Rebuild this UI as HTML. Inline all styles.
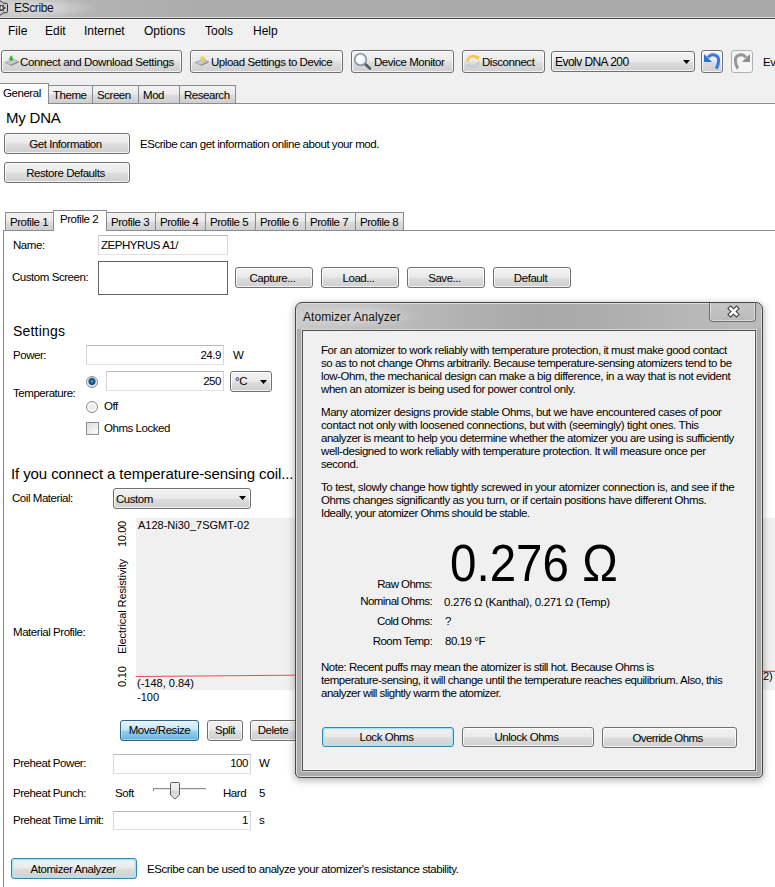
<!DOCTYPE html>
<html><head><meta charset="utf-8">
<style>
html,body{margin:0;padding:0;width:775px;height:887px;overflow:hidden}
body{width:775px;height:887px;overflow:hidden;background:#f0f0f0;position:relative;font-family:"Liberation Sans",sans-serif;font-size:11px;color:#000}
.a{position:absolute;box-sizing:border-box}
.t{position:absolute;white-space:pre;line-height:13px;font-size:11.5px;letter-spacing:-0.45px}
.s{position:absolute;white-space:pre;font-size:12px;line-height:14px}
.btn{position:absolute;box-sizing:border-box;border:1px solid #707070;border-radius:3px;background:linear-gradient(#f2f2f2,#ebebeb 48%,#dddddd 52%,#cfcfcf);box-shadow:inset 0 0 0 1px rgba(255,255,255,.75);white-space:pre;font-size:11.5px;letter-spacing:-0.45px;text-align:center}
.tb{position:absolute;box-sizing:border-box;background:#fff;border:1px solid #d6d6d6;border-top-color:#b9b9b9;border-bottom-color:#e2e2e2}
.tab{position:absolute;box-sizing:border-box;border:1px solid #898c95;border-bottom:none;background:linear-gradient(#f2f2f2,#ebebeb 48%,#dddddd 52%,#cfcfcf);text-align:left;padding-left:4px;white-space:pre;font-size:11.5px;letter-spacing:-0.45px}
.tabsel{background:#fff;z-index:2}
</style></head><body>

<!-- title bar -->
<div class="a" style="left:0;top:0;width:775px;height:17px;background:linear-gradient(90deg,#c4c4c4 0,#b4b4b4 70px,#acacac 200px,#a9a9a9 775px)"></div>
<div class="a" style="left:0;top:17px;width:775px;height:1px;background:#dedede"></div>
<div class="a" style="left:0;top:18px;width:775px;height:1px;background:#3f3f3f"></div>
<div class="a" style="left:0;top:19px;width:775px;height:1px;background:#fbfbfb"></div>


<!-- menu -->
<div class="s" style="left:8px;top:24px">File</div>
<div class="s" style="left:45px;top:24px">Edit</div>
<div class="s" style="left:84px;top:24px">Internet</div>
<div class="s" style="left:144px;top:24px">Options</div>
<div class="s" style="left:205px;top:24px">Tools</div>
<div class="s" style="left:253px;top:24px">Help</div>

<!-- toolbar -->
<div class="btn" style="left:1px;top:50px;width:181px;height:23px;text-align:left;padding-left:18px;padding-top:1px;line-height:21px;letter-spacing:-0.36px">Connect and Download Settings</div>
<div class="btn" style="left:190px;top:50px;width:153px;height:23px;text-align:left;padding-left:20px;padding-top:1px;line-height:21px">Upload Settings to Device</div>
<div class="btn" style="left:351px;top:50px;width:103px;height:23px;text-align:left;padding-left:22px;padding-top:1px;line-height:21px">Device Monitor</div>
<div class="btn" style="left:462px;top:50px;width:83px;height:23px;text-align:left;padding-left:19px;padding-top:1px;line-height:21px">Disconnect</div>
<div class="btn" style="left:551px;top:51px;width:144px;height:21px;text-align:left;padding-left:3px;padding-top:1px;line-height:19px;font-size:12px;letter-spacing:-0.55px">Evolv DNA 200</div>
<div class="btn" style="left:701px;top:50px;width:22px;height:23px"></div>
<div class="btn" style="left:731px;top:50px;width:22px;height:23px;border-color:#adb2b5;background:#f4f4f4;box-shadow:none"></div>
<div class="t" style="left:763px;top:56px;width:12px;overflow:hidden">Ev</div>


<!-- toolbar icons -->
<svg class="a" style="left:4px;top:54px" width="16" height="13" viewBox="0 0 16 13"><path d="M1 8.5 L9 5.5 L14.5 7.5 L6.5 11 Z" fill="#c9c9d2" stroke="#9a9aa8" stroke-width=".8"/><path d="M6.5 11 L14.5 7.5 L14.5 8.8 L6.5 12.2 Z" fill="#8c8c98"/><path d="M6 2 H8.5 V4.5 H10.2 L7.25 7.6 L4.3 4.5 H6 Z" fill="#2f9e2a" stroke="#a6e09c" stroke-width=".7"/></svg>
<svg class="a" style="left:194px;top:54px" width="16" height="13" viewBox="0 0 16 13"><path d="M1 8.5 L9 5.5 L14.5 7.5 L6.5 11 Z" fill="#c9c9d2" stroke="#9a9aa8" stroke-width=".8"/><path d="M6.5 11 L14.5 7.5 L14.5 8.8 L6.5 12.2 Z" fill="#8c8c98"/><path d="M7.2 7.8 V5 H5.6 L8.6 1.8 L11.6 5 H10 V7.8 Z" fill="#f4d655" stroke="#e0c060" stroke-width=".5"/></svg>
<svg class="a" style="left:353px;top:52px" width="20" height="18" viewBox="0 0 20 18"><line x1="11.5" y1="11.5" x2="17" y2="16.5" stroke="#505a64" stroke-width="2.6" stroke-linecap="round"/><circle cx="7.5" cy="7.5" r="5.8" fill="#eef4fb" stroke="#8894a0" stroke-width="1.6"/><circle cx="6.5" cy="6.5" r="3" fill="#ffffff" opacity=".8"/></svg>
<svg class="a" style="left:465px;top:54px" width="16" height="15" viewBox="0 0 16 15"><path d="M2.5 7.5 A5.5 5.5 0 0 1 12.5 4.5" fill="none" stroke="#f0c850" stroke-width="2.6"/><path d="M10.5 1.5 L14.5 2.5 L13.5 6.5 Z" fill="#f0c850"/><path d="M13.5 7.5 A5.5 5.5 0 0 1 3.5 10.5" fill="none" stroke="#c4ccd4" stroke-width="2.6"/><path d="M5.5 13.5 L1.5 12.5 L2.5 8.5 Z" fill="#c4ccd4"/></svg>
<svg class="a" style="left:701px;top:50px" width="22" height="23" viewBox="0 0 22 23"><path d="M3 4 L3 12 L11 12 Z" fill="#2f6fd8"/><path d="M7.2 7.5 A5.6 5.6 0 0 1 17.6 10.5 Q17.6 15 15.2 18.6" fill="none" stroke="#3a78dc" stroke-width="3"/></svg>
<svg class="a" style="left:731px;top:50px" width="22" height="23" viewBox="0 0 22 23"><path d="M19 4 L19 12 L11 12 Z" fill="#8e8e8e"/><path d="M14.8 7.5 A5.6 5.6 0 0 0 4.4 10.5 Q4.4 15 6.8 18.6" fill="none" stroke="#979797" stroke-width="3"/></svg>
<!-- dropdown arrows -->
<svg class="a" style="left:683px;top:60px" width="8" height="5" viewBox="0 0 8 5"><path d="M0 0 H7 L3.5 4 Z" fill="#000"/></svg>
<!-- app icon -->
<div class="a" style="left:0;top:0;width:120px;height:17px;background:radial-gradient(ellipse 60px 12px at 38px 8px,rgba(235,235,235,.75),rgba(235,235,235,0))"></div>
<svg class="a" style="left:0;top:0" width="10" height="17" viewBox="0 0 10 17"><path d="M0 1 L1.5 1.5 L3 3.2 H6.8 L7.5 4.2 V11.8 L6.8 12.8 H3 L1.5 14.5 L0 15" fill="#c8c8c8" stroke="#333" stroke-width="1"/><circle cx="1" cy="8" r="2.6" fill="#777" stroke="#222" stroke-width=".8"/><rect x="1" y="6.5" width="1.2" height="2.5" fill="#fff"/><circle cx="4.6" cy="8" r="1" fill="#444"/><circle cx="3.4" cy="5.4" r=".6" fill="#333"/><circle cx="3.4" cy="10.6" r=".6" fill="#333"/></svg>
<div class="s" style="left:14px;top:1px;color:#111;letter-spacing:-0.4px">EScribe</div>

<!-- main tabs -->
<div class="a" style="left:0;top:103px;width:775px;height:784px;background:#fff;border-top:1px solid #898c95"></div>
<div class="tab" style="left:48px;top:85px;width:45px;height:18px;line-height:19px">Theme</div>
<div class="tab" style="left:92px;top:85px;width:47px;height:18px;line-height:19px">Screen</div>
<div class="tab" style="left:138px;top:85px;width:42px;height:18px;line-height:19px">Mod</div>
<div class="tab" style="left:179px;top:85px;width:57px;height:18px;line-height:19px">Research</div>
<div class="tab tabsel" style="left:-1px;top:83px;width:50px;height:21px;line-height:19px;padding-left:3px">General</div>

<div class="t" style="left:6px;top:109px;font-size:15px;line-height:17px;letter-spacing:-0.2px">My DNA</div>
<div class="btn" style="left:4px;top:133px;width:126px;height:21px;line-height:19px;padding-top:1px;padding-right:3px">Get Information</div>
<div class="t" style="left:140px;top:138px">EScribe can get information online about your mod.</div>
<div class="btn" style="left:4px;top:162px;width:126px;height:21px;line-height:19px;padding-top:1px;padding-right:3px">Restore Defaults</div>


<!-- profile tabs -->
<div class="a" style="left:3px;top:230px;width:772px;height:657px;background:#fff;border-left:1px solid #898c95;border-top:1px solid #898c95"></div>
<div class="tab" style="left:5px;top:212px;width:49px;height:18px;line-height:19px">Profile 1</div>
<div class="tab" style="left:106px;top:212px;width:50px;height:18px;line-height:19px">Profile 3</div>
<div class="tab" style="left:155px;top:212px;width:51px;height:18px;line-height:19px">Profile 4</div>
<div class="tab" style="left:205px;top:212px;width:51px;height:18px;line-height:19px">Profile 5</div>
<div class="tab" style="left:255px;top:212px;width:51px;height:18px;line-height:19px">Profile 6</div>
<div class="tab" style="left:305px;top:212px;width:51px;height:18px;line-height:19px">Profile 7</div>
<div class="tab" style="left:355px;top:212px;width:49px;height:18px;line-height:19px">Profile 8</div>
<div class="tab tabsel" style="left:53px;top:210px;width:54px;height:21px;line-height:17px;padding-left:6px">Profile 2</div>

<div class="t" style="left:13px;top:239px">Name:</div>
<div class="tb" style="left:98px;top:235px;width:130px;height:20px"></div>
<div class="t" style="left:101px;top:239px">ZEPHYRUS A1/</div>
<div class="t" style="left:12px;top:271px">Custom Screen:</div>
<div class="a" style="left:98px;top:261px;width:130px;height:34px;border:1px solid #646464;background:#fff"></div>
<div class="btn" style="left:235px;top:267px;width:78px;height:21px;line-height:19px;padding-top:1px;padding-right:3px">Capture...</div>
<div class="btn" style="left:321px;top:267px;width:78px;height:21px;line-height:19px;padding-top:1px;padding-right:3px">Load...</div>
<div class="btn" style="left:407px;top:267px;width:78px;height:21px;line-height:19px;padding-top:1px;padding-right:3px">Save...</div>
<div class="btn" style="left:493px;top:267px;width:78px;height:21px;line-height:19px;padding-top:1px;padding-right:3px">Default</div>

<div class="t" style="left:13px;top:323px;font-size:14px;line-height:16px;letter-spacing:0.2px">Settings</div>
<div class="t" style="left:13px;top:349px">Power:</div>
<div class="tb" style="left:86px;top:345px;width:138px;height:20px"></div>
<div class="t" style="left:86px;top:349px;width:135px;text-align:right">24.9</div>
<div class="t" style="left:233px;top:349px">W</div>
<div class="t" style="left:13px;top:387px">Temperature:</div>
<div class="a" style="left:86px;top:376px;width:12px;height:12px;border-radius:50%;border:1px solid #8a8a8a;background:radial-gradient(circle at 50% 45%,#6fb6e0 0,#1d6a9e 1.5px,#0f4670 3px,#8aa8bd 3.6px,#f6f6f6 4.4px,#e8e8e8 5px)"></div>
<div class="tb" style="left:106px;top:371px;width:118px;height:20px"></div>
<div class="t" style="left:106px;top:375px;width:115px;text-align:right">250</div>
<div class="btn" style="left:230px;top:371px;width:42px;height:21px;line-height:19px;text-align:left;padding-left:4px">°C</div>
<svg class="a" style="left:260px;top:380px" width="8" height="5" viewBox="0 0 8 5"><path d="M0 0 H7 L3.5 4 Z" fill="#000"/></svg>
<div class="a" style="left:86px;top:401px;width:12px;height:12px;border-radius:50%;border:1px solid #8a8a8a;background:radial-gradient(circle at 50% 50%,#e8e8e8 0,#f8f8f8 5px)"></div>
<div class="t" style="left:104px;top:400px">Off</div>
<div class="a" style="left:86px;top:422px;width:13px;height:13px;border:1px solid #8e8f8f;background:linear-gradient(135deg,#dcdcdc,#fbfbfb)"></div>
<div class="t" style="left:104px;top:422px">Ohms Locked</div>

<div class="t" style="left:11px;top:465px;font-size:15px;line-height:17px;letter-spacing:-0.1px">If you connect a temperature-sensing coil...</div>
<div class="t" style="left:12px;top:492px">Coil Material:</div>
<div class="btn" style="left:113px;top:488px;width:138px;height:21px;line-height:19px;text-align:left;padding-left:2px;padding-top:1px">Custom</div>
<svg class="a" style="left:239px;top:496px" width="8" height="5" viewBox="0 0 8 5"><path d="M0 0 H7 L3.5 4 Z" fill="#000"/></svg>

<!-- chart -->
<div class="a" style="left:136px;top:518px;width:639px;height:172px;background:#f0f0f0"></div>
<div class="a" style="left:136px;top:676px;width:639px;height:1px;background:#e05050;transform:rotate(-0.47deg);transform-origin:0 0"></div>
<div class="t" style="left:138px;top:519px;font-size:11px;letter-spacing:0">A128-Ni30_7SGMT-02</div>
<div class="t" style="left:137px;top:677px;font-size:11px;letter-spacing:0">(-148, 0.84)</div>
<div class="t" style="left:137px;top:691px;font-size:11px;letter-spacing:0">-100</div>
<div class="t" style="left:13px;top:626px">Material Profile:</div>


<div class="t" style="left:116px;top:547px;font-size:11px;letter-spacing:-0.35px;transform-origin:0 0;transform:rotate(-90deg)">10.00</div>
<div class="t" style="left:116px;top:654px;font-size:11px;letter-spacing:-0.1px;transform-origin:0 0;transform:rotate(-90deg)">Electrical Resistivity</div>
<div class="t" style="left:116px;top:687px;font-size:11px;letter-spacing:-0.2px;transform-origin:0 0;transform:rotate(-90deg)">0.10</div>
<div class="t" style="left:763px;top:670px;font-size:11px;letter-spacing:0">2)</div>
<svg class="a" style="left:153px;top:782px" width="54" height="18" viewBox="0 0 54 18"><rect x="0" y="6" width="53" height="1" fill="#8e8e8e"/><rect x="0" y="7" width="53" height="1" fill="#e4e4e4"/><rect x="0" y="6" width="1" height="3" fill="#8e8e8e"/><defs><linearGradient id="thg" x1="0" y1="0" x2="0" y2="1"><stop offset="0" stop-color="#f4f4f4"/><stop offset=".5" stop-color="#e6e6e6"/><stop offset=".55" stop-color="#d4d4d4"/><stop offset="1" stop-color="#e8e8e8"/></linearGradient></defs><path d="M17.5 1.5 Q17.5 0.5 18.5 0.5 H25.5 Q26.5 0.5 26.5 1.5 V13 L22 17 L17.5 13 Z" fill="url(#thg)" stroke="#5e5e5e" stroke-width="1"/></svg>
<div class="btn" style="left:120px;top:720px;width:79px;height:21px;line-height:19px;border-color:#2c628b;background:linear-gradient(#e5f4fc,#c4e5f6 48%,#98d1ef 52%,#68b3db);box-shadow:inset 0 0 0 1px rgba(255,255,255,.35)">Move/Resize</div>
<div class="btn" style="left:207px;top:720px;width:36px;height:21px;line-height:19px">Split</div>
<div class="btn" style="left:250px;top:720px;width:50px;height:21px;line-height:19px;padding-right:4px">Delete</div>

<div class="t" style="left:13px;top:757px">Preheat Power:</div>
<div class="tb" style="left:113px;top:754px;width:138px;height:20px"></div>
<div class="t" style="left:113px;top:757px;width:135px;text-align:right">100</div>
<div class="t" style="left:259px;top:757px">W</div>
<div class="t" style="left:13px;top:787px">Preheat Punch:</div>
<div class="t" style="left:115px;top:787px">Soft</div>
<div class="t" style="left:223px;top:787px">Hard</div>
<div class="t" style="left:259px;top:787px">5</div>
<div class="t" style="left:13px;top:814px">Preheat Time Limit:</div>
<div class="tb" style="left:113px;top:811px;width:138px;height:19px"></div>
<div class="t" style="left:113px;top:814px;width:135px;text-align:right">1</div>
<div class="t" style="left:259px;top:814px">s</div>

<div class="btn" style="left:11px;top:858px;width:126px;height:21px;line-height:19px;padding-top:1px;padding-right:2px;border-color:#3585b0;box-shadow:inset 0 0 0 1px #9fe6fa,inset 0 0 0 2px rgba(180,236,250,.45)">Atomizer Analyzer</div>
<div class="t" style="left:147px;top:863px">EScribe can be used to analyze your atomizer's resistance stability.</div>


<!-- dialog -->
<div class="a" style="left:295px;top:302px;width:468px;height:476px;border:1px solid #484848;border-radius:7px 7px 5px 5px;background:#acacac;box-shadow:inset 0 0 0 1px #dadada,0 2px 7px 1px rgba(0,0,0,.28)"></div>
<div class="a" style="left:297px;top:304px;width:464px;height:25px;border-radius:5px 5px 0 0;background:linear-gradient(90deg,#c9c9c9 0,#bdbdbd 90px,#b2b2b2 160px,#a9a9a9 240px,#acacac 300px,#b8b8b8 400px,#bababa 464px)"></div>
<div class="a" style="left:297px;top:304px;width:160px;height:25px;background:radial-gradient(ellipse 70px 12px at 55px 12px,rgba(225,225,225,.75),rgba(225,225,225,0))"></div>
<div class="s" style="left:303px;top:310px;color:#111;letter-spacing:0.05px">Atomizer Analyzer</div>
<div class="a" style="left:709px;top:303px;width:47px;height:19px;border:1px solid #6f6f6f;border-top:none;border-radius:0 0 4px 4px;background:linear-gradient(#c6c6c6,#bababa);box-shadow:inset 1px 0 0 rgba(255,255,255,.45),inset -1px -1px 0 rgba(255,255,255,.45)"></div>
<svg class="a" style="left:726px;top:305px" width="15" height="13" viewBox="0 0 15 13"><path d="M4.5 3.5 L10.5 9.5 M10.5 3.5 L4.5 9.5" stroke="#3c3c3c" stroke-width="4.6" stroke-linecap="square"/><path d="M4.5 3.5 L10.5 9.5 M10.5 3.5 L4.5 9.5" stroke="#ffffff" stroke-width="2.6" stroke-linecap="square"/></svg>
<div class="a" style="left:302px;top:330px;width:454px;height:441px;border:1px solid #505050;background:#f0f0f0;box-shadow:0 0 0 1px #d6d6d6,inset -1px -1px 0 #fff"></div>

<div class="t" style="left:321px;top:344px;letter-spacing:-0.434px">For an atomizer to work reliably with temperature protection, it must make good contact</div>
<div class="t" style="left:321px;top:357px;letter-spacing:-0.471px">so as to not change Ohms arbitrarily. Because temperature-sensing atomizers tend to be</div>
<div class="t" style="left:321px;top:370px;letter-spacing:-0.396px">low-Ohm, the mechanical design can make a big difference, in a way that is not evident</div>
<div class="t" style="left:321px;top:383px;letter-spacing:-0.427px">when an atomizer is being used for power control only.</div>

<div class="t" style="left:321px;top:406px;letter-spacing:-0.427px">Many atomizer designs provide stable Ohms, but we have encountered cases of poor</div>
<div class="t" style="left:321px;top:419px;letter-spacing:-0.377px">contact not only with loosened connections, but with (seemingly) tight ones. This</div>
<div class="t" style="left:321px;top:432px;letter-spacing:-0.468px">analyzer is meant to help you determine whether the atomizer you are using is sufficiently</div>
<div class="t" style="left:321px;top:445px;letter-spacing:-0.428px">well-designed to work reliably with temperature protection. It will measure once per</div>
<div class="t" style="left:321px;top:458px;letter-spacing:-0.450px">second.</div>

<div class="t" style="left:321px;top:481px;letter-spacing:-0.377px">To test, slowly change how tightly screwed in your atomizer connection is, and see if the</div>
<div class="t" style="left:321px;top:494px;letter-spacing:-0.433px">Ohms changes significantly as you turn, or if certain positions have different Ohms.</div>
<div class="t" style="left:321px;top:507px;letter-spacing:-0.532px">Ideally, your atomizer Ohms should be stable.</div>


<div class="t" style="left:450px;top:535px;font-size:52px;line-height:56px;letter-spacing:0;transform:scaleX(0.914);transform-origin:0 0">0.276 Ω</div>
<div class="t" style="left:330px;top:578px;width:102px;text-align:right;letter-spacing:-0.58px">Raw Ohms:</div>
<div class="t" style="left:330px;top:595px;width:102px;text-align:right;letter-spacing:-0.58px">Nominal Ohms:</div>
<div class="t" style="left:330px;top:615px;width:102px;text-align:right;letter-spacing:-0.58px">Cold Ohms:</div>
<div class="t" style="left:330px;top:635px;width:102px;text-align:right;letter-spacing:-0.58px">Room Temp:</div>
<div class="t" style="left:444px;top:596px;letter-spacing:-0.32px">0.276 Ω (Kanthal), 0.271 Ω (Temp)</div>
<div class="t" style="left:445px;top:615px">?</div>
<div class="t" style="left:445px;top:635px">80.19 °F</div>

<div class="t" style="left:321px;top:661px;letter-spacing:-0.464px">Note: Recent puffs may mean the atomizer is still hot. Because Ohms is</div>
<div class="t" style="left:321px;top:674px;letter-spacing:-0.455px">temperature-sensing, it will change until the temperature reaches equilibrium. Also, this</div>
<div class="t" style="left:321px;top:687px;letter-spacing:-0.520px">analyzer will slightly warm the atomizer.</div>


<div class="btn" style="left:322px;top:727px;width:132px;height:20px;line-height:18px;padding-right:3px;border-color:#3585b0;box-shadow:inset 0 0 0 1px #9fe6fa,inset 0 0 0 2px rgba(180,236,250,.45)">Lock Ohms</div>
<div class="btn" style="left:462px;top:727px;width:132px;height:20px;line-height:18px;padding-right:3px">Unlock Ohms</div>
<div class="btn" style="left:602px;top:727px;width:135px;height:21px;line-height:19px;padding-right:4px;padding-top:1px;letter-spacing:-0.6px">Override Ohms</div>

</body></html>
